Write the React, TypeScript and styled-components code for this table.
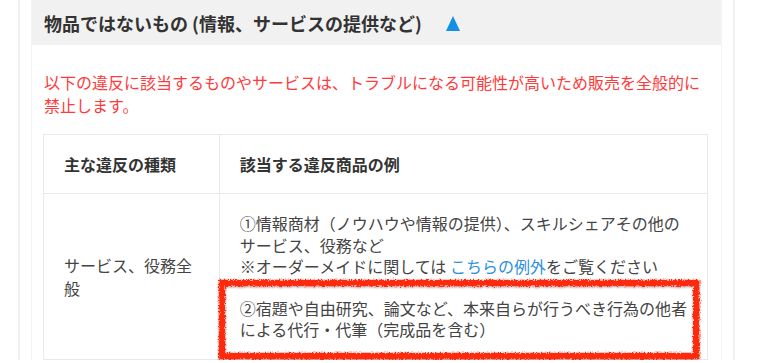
import React from 'react'
import styled, { createGlobalStyle } from 'styled-components'

const GlobalStyle = createGlobalStyle`
  html, body {
    margin: 0;
    padding: 0;
    background: #fff;
  }
  body {
    font-family: "Noto Sans CJK JP", "Noto Sans", sans-serif;
    color: #333;
  }
`

const Page = styled.div`
  box-sizing: border-box;
  width: 717px;
  margin-left: 18px;
  padding: 0 11px;
  border-left: 2px solid #f0f0f0;
  border-right: 2px solid #f0f0f0;
`

const Panel = styled.section`
  border-left: 1px solid #f4f4f4;
  border-right: 1px solid #f4f4f4;
`

const PanelHeader = styled.div`
  display: flex;
  align-items: center;
  gap: 24px;
  height: 45px;
  padding: 0 12px;
  background: #f1f1f1;
  font-size: 18px;
  font-weight: 700;
  color: #333;
`

const Toggle = styled.span`
  width: 0;
  height: 0;
  border-left: 7px solid transparent;
  border-right: 7px solid transparent;
  border-bottom: 15px solid #1490e4;
  margin-top: 1px;
`

const PanelBody = styled.div`
  padding: 26px 13px 0 11px;
`

const Notice = styled.p`
  margin: 0 0 17px 1px;
  font-size: 16px;
  line-height: 23px;
  color: #ff3a3a;
`

const Table = styled.table`
  width: 100%;
  border-collapse: collapse;
  border: 1px solid #e9e9e9;
  font-size: 16px;
`

const HeadCell = styled.th<{ $width?: number }>`
  width: ${({ $width }) => ($width ? `${$width}px` : 'auto')};
  height: 59px;
  padding: 0 20px;
  text-align: left;
  font-weight: 700;
  color: #333;
  border: 1px solid #e9e9e9;
  box-sizing: border-box;
`

const Cell = styled.td`
  padding: 19px 20px 18px;
  vertical-align: middle;
  color: #444;
  line-height: 23px;
  border: 1px solid #e9e9e9;
`

const Item = styled.p`
  position: relative;
  margin: 0;
  line-height: 21.5px;
  white-space: nowrap;
  & + & {
    margin-top: 20px;
  }
`

const Link = styled.a`
  color: #2e8fe0;
  text-decoration: none;
`

const Marker = styled.svg`
  position: absolute;
  left: -22px;
  top: -19px;
  width: calc(100% + 35px);
  height: calc(100% + 38px);
  overflow: visible;
  pointer-events: none;
`

// rough red frame drawn around a highlighted item
const RoughFrame = () => (
  <Marker>
    <defs>
      <filter id="rough" x="-5%" y="-20%" width="110%" height="140%">
        <feTurbulence type="fractalNoise" baseFrequency="0.8" numOctaves="3" seed="7" result="noise" />
        <feDisplacementMap in="SourceGraphic" in2="noise" scale="5" xChannelSelector="R" yChannelSelector="G" result="warp" />
        <feDropShadow in="warp" dx="0" dy="1" stdDeviation="0.8" floodColor="#000" floodOpacity="0.35" />
      </filter>
    </defs>
    <rect
      x="4"
      y="4"
      fill="none"
      stroke="#ff2a0a"
      strokeWidth="6.5"
      filter="url(#rough)"
      style={{ width: 'calc(100% - 8px)', height: 'calc(100% - 8px)' }}
    />
  </Marker>
)

const App = () => (
  <>
    <GlobalStyle />
    <Page>
      <Panel>
        <PanelHeader>
          <span>物品ではないもの (情報、サービスの提供など)</span>
          <Toggle />
        </PanelHeader>
        <PanelBody>
          <Notice>
            以下の違反に該当するものやサービスは、トラブルになる可能性が高いため販売を全般的に禁止します。
          </Notice>
          <Table>
            <thead>
              <tr>
                <HeadCell $width={176}>主な違反の種類</HeadCell>
                <HeadCell>該当する違反商品の例</HeadCell>
              </tr>
            </thead>
            <tbody>
              <tr>
                <Cell>サービス、役務全般</Cell>
                <Cell>
                  <Item>
                    ①情報商材（ノウハウや情報の提供）、スキルシェアその他の
                    <br />
                    サービス、役務など
                    <br />
                    ※オーダーメイドに関しては <Link href="#">こちらの例外</Link>をご覧ください
                  </Item>
                  <Item>
                    ②宿題や自由研究、論文など、本来自らが行うべき行為の他者
                    <br />
                    による代行・代筆（完成品を含む）
                    <RoughFrame />
                  </Item>
                </Cell>
              </tr>
            </tbody>
          </Table>
        </PanelBody>
      </Panel>
    </Page>
  </>
)

export default App
